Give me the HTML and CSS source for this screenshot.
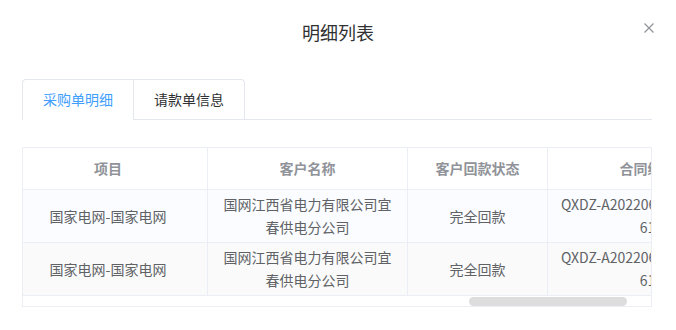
FILE: index.html
```html
<!DOCTYPE html>
<html lang="zh-CN">
<head>
    <meta charset="UTF-8">
    <meta name="viewport" content="width=device-width, initial-scale=1.0">
    <title>明细列表</title>
    <link rel="stylesheet" href="styles.css">
</head>
<body>

    <div class="dialog">
        <div class="dialog-header">
            <span class="dialog-title">明细列表</span>
            <button class="dialog-close" aria-label="关闭">
                <svg width="10" height="10" viewBox="0 0 10 10">
                    <path d="M0.5 0.5 L9.5 9.5 M9.5 0.5 L0.5 9.5" stroke="#909399" stroke-width="1.2" fill="none"/>
                </svg>
            </button>
        </div>

        <div class="dialog-body">
            <div class="tabs-header">
                <div class="tabs-nav">
                    <div class="tab-item active">采购单明细</div>
                    <div class="tab-item">请款单信息</div>
                </div>
            </div>

            <div class="table-wrapper">
                <table class="detail-table">
                    <thead>
                        <tr>
                            <th class="col-project">项目</th>
                            <th class="col-customer">客户名称</th>
                            <th class="col-status">客户回款状态</th>
                            <th class="col-contract">合同编号</th>
                        </tr>
                    </thead>
                    <tbody>
                        <tr class="row-hover">
                            <td class="project">国家电网-国家电网</td>
                            <td>国网江西省电力有限公司宜春供电分公司</td>
                            <td>完全回款</td>
                            <td class="code">QXDZ-A202206150000000061</td>
                        </tr>
                        <tr class="row-striped">
                            <td class="project">国家电网-国家电网</td>
                            <td>国网江西省电力有限公司宜春供电分公司</td>
                            <td>完全回款</td>
                            <td class="code">QXDZ-A202206150000000061</td>
                        </tr>
                    </tbody>
                </table>
                <!-- horizontal scroll bar -->
                <div class="scrollbar">
                    <div class="scrollbar-thumb"></div>
                </div>
            </div>
        </div>
    </div>

</body>
</html>
```

FILE: styles.css
```css
body {
    margin: 0;
    font-family: "Noto Sans CJK SC", "Noto Sans", sans-serif;
    background-color: #ffffff;
    color: #606266;
}
.dialog {
    width: 676px;
    height: 330px;
    overflow: hidden;
}
.dialog-header {
    position: relative;
    height: 54px;
    padding-top: 20px;
    box-sizing: border-box;
    text-align: center;
}
.dialog-title {
    font-size: 18px;
    line-height: 24px;
    color: #303133;
}
.dialog-close {
    position: absolute;
    top: 23px;
    right: 22px;
    width: 10px;
    height: 10px;
    padding: 0;
    border: none;
    background: none;
    display: flex;
    cursor: pointer;
}
.dialog-body {
    padding: 25px 24px 0 22px;
}
.tabs-header {
    border-bottom: 1px solid #e4e7ed;
    display: flex;
}
.tabs-nav {
    display: flex;
    border: 1px solid #e4e7ed;
    border-bottom: none;
    border-radius: 4px 4px 0 0;
    margin-bottom: -1px;
}
.tab-item {
    height: 39px;
    line-height: 39px;
    padding: 0 20px;
    font-size: 14px;
    color: #303133;
    border-bottom: 1px solid #e4e7ed;
}
.tab-item + .tab-item {
    border-left: 1px solid #e4e7ed;
}
.tab-item.active {
    color: #409eff;
    border-bottom-color: #ffffff;
}
.table-wrapper {
    margin-top: 27px;
    width: 630px;
    box-sizing: border-box;
    border: 1px solid #ebeef5;
    overflow: hidden;
}
.detail-table {
    table-layout: fixed;
    width: 725px;
    border-collapse: separate;
    border-spacing: 0;
    font-size: 14px;
}
.detail-table th,
.detail-table td {
    box-sizing: border-box;
    border-right: 1px solid #ebeef5;
    border-bottom: 1px solid #ebeef5;
    text-align: center;
    padding: 0 10px;
}
.detail-table th {
    line-height: 41px;
    color: #909399;
    font-weight: bold;
    background-color: #ffffff;
}
.detail-table td {
    padding-top: 3px;
    padding-bottom: 3px;
    line-height: 23px;
    height: 53px;
    color: #606266;
}
.col-project { width: 185px; }
.col-customer { width: 200px; }
.col-status { width: 140px; }
.col-contract { width: 200px; }
/* first column sits a little left of centre */
.detail-table th.col-project,
.detail-table td.project {
    padding-left: 10px;
    padding-right: 24px;
}
.detail-table td.code {
    word-break: break-all;
}
.row-hover td {
    background-color: #fafcff;
}
.row-striped td {
    background-color: #fafafa;
}
.scrollbar {
    height: 10px;
    background-color: #ffffff;
    display: flex;
    align-items: center;
}
.scrollbar-thumb {
    width: 158px;
    height: 9px;
    margin-left: 446px;
    border-radius: 5px;
    background-color: #dddddd;
}
```
